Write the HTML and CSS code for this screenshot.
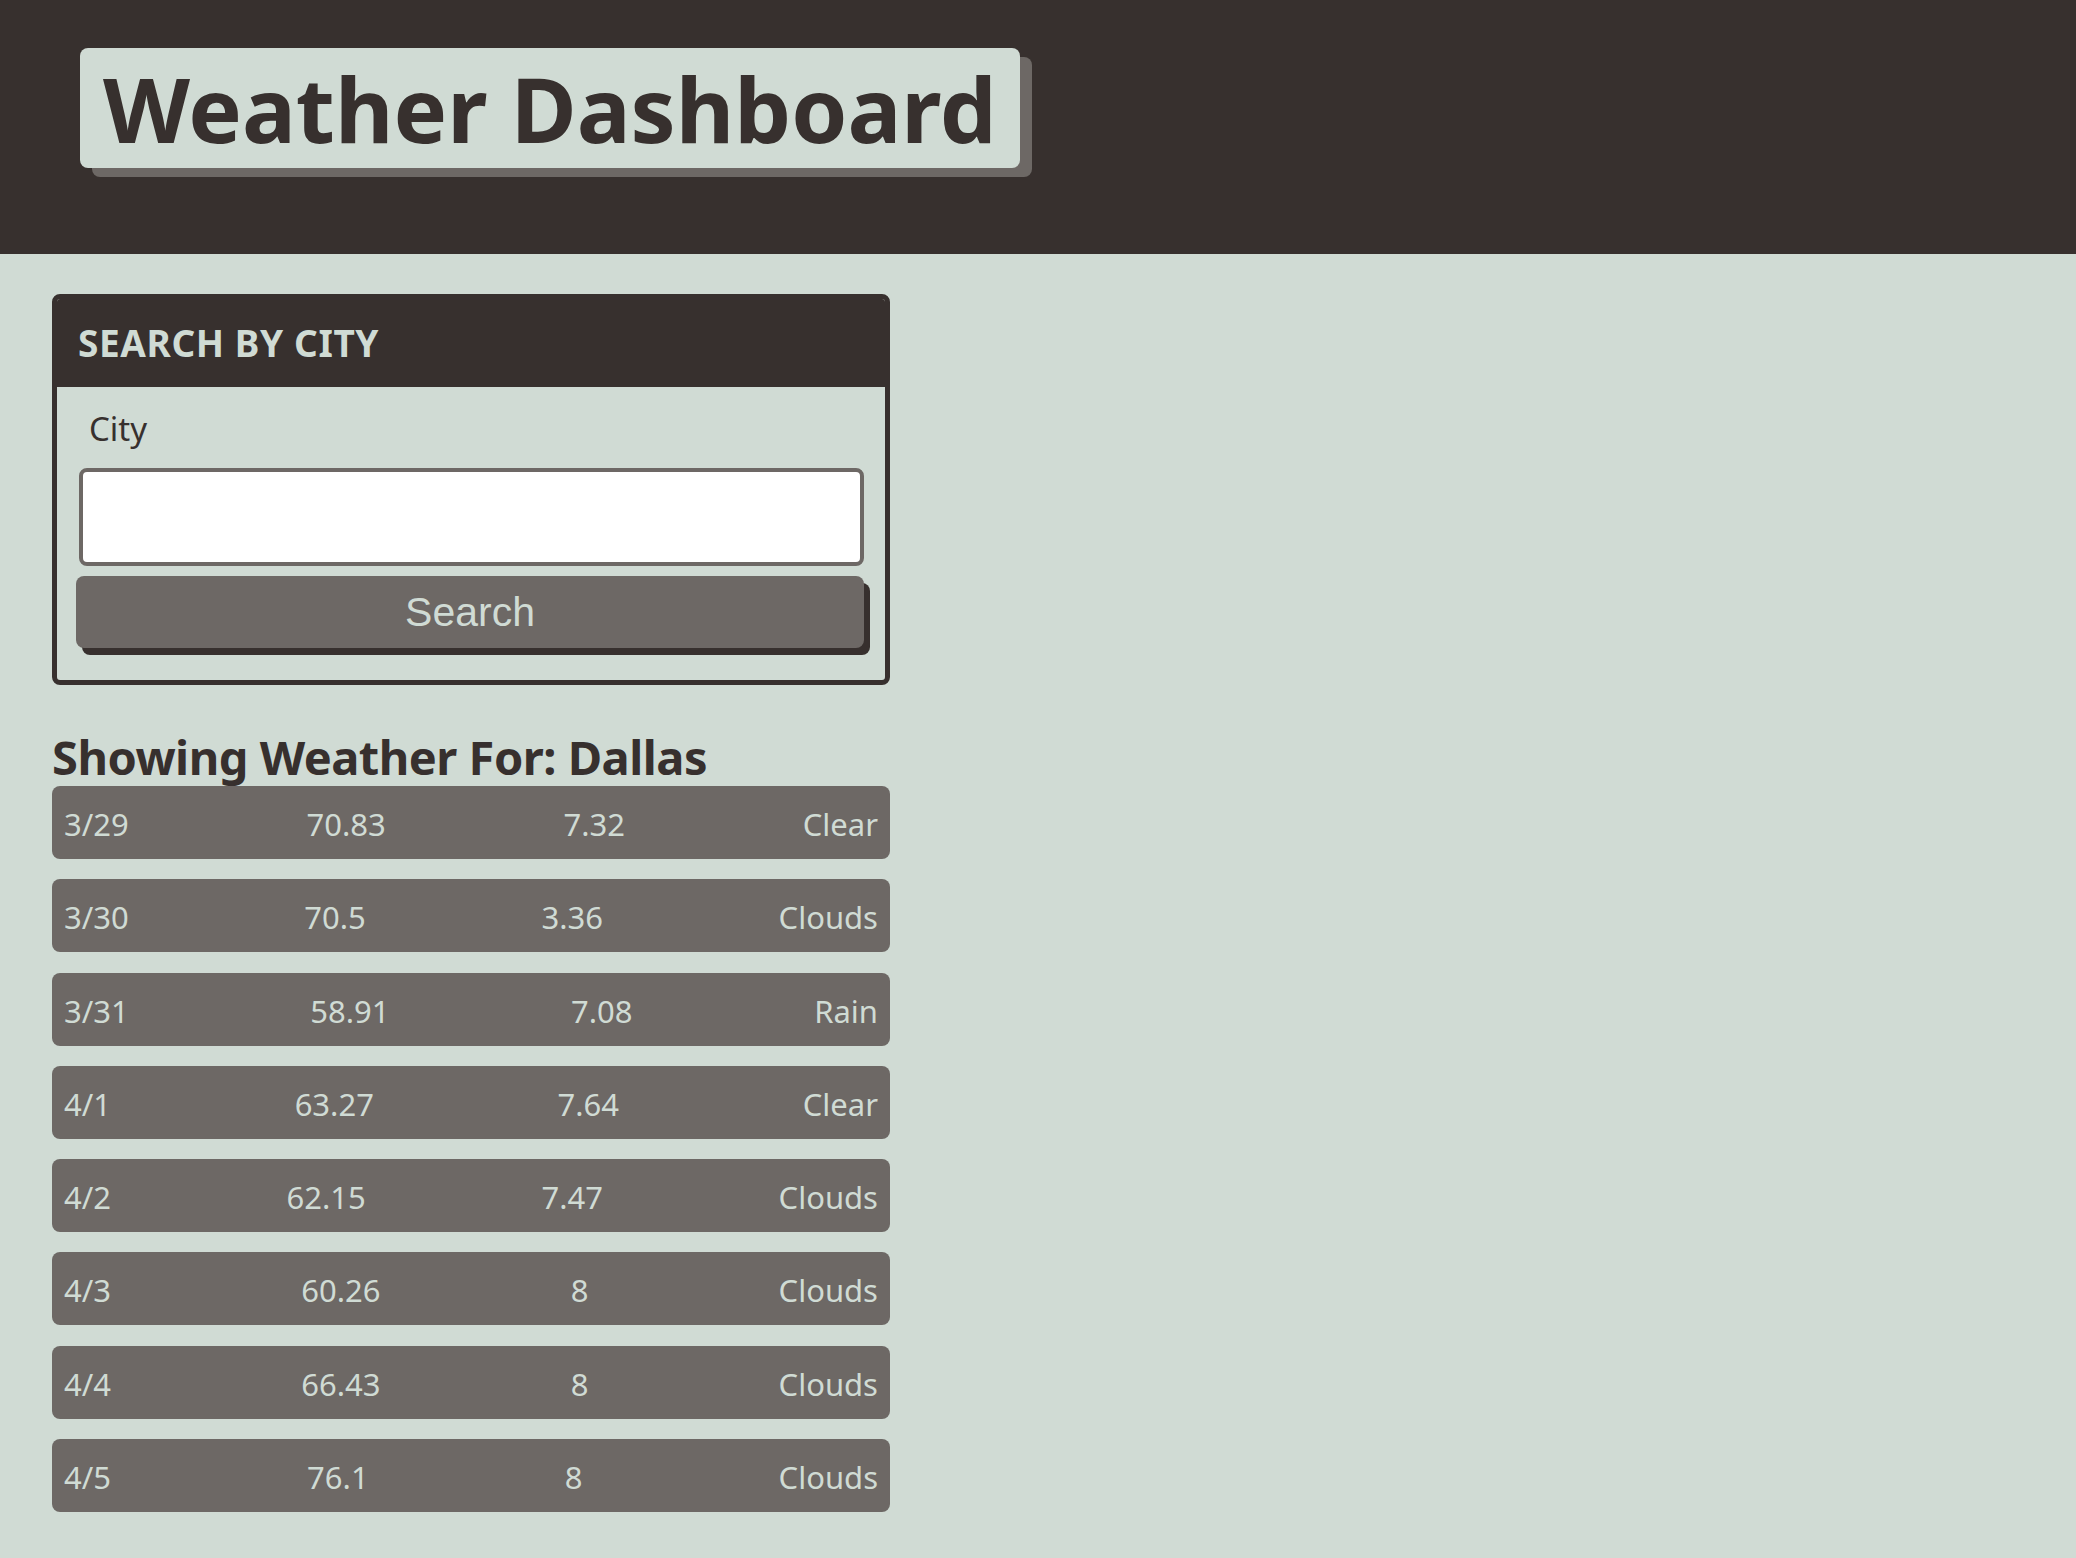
FILE: index.html
```html
<!DOCTYPE html>
<html lang="en">
<head>
<meta charset="utf-8">
<title>Weather Dashboard</title>
<link rel="stylesheet" href="styles.css">
</head>
<body>
<header class="site-header">
  <h1 class="site-title">Weather Dashboard</h1>
</header>
<main class="content">
  <section class="search-card">
    <h2 class="card-header">Search by City</h2>
    <div class="card-body">
      <label class="city-label" for="city">City</label>
      <input class="city-input" id="city" type="text">
      <button class="search-btn" type="button">Search</button>
    </div>
  </section>
  <h2 class="results-title">Showing Weather For: Dallas</h2>
  <ul class="forecast">
    <li class="day"><span>3/29</span><span>70.83</span><span>7.32</span><span>Clear</span></li>
    <li class="day"><span>3/30</span><span>70.5</span><span>3.36</span><span>Clouds</span></li>
    <li class="day"><span>3/31</span><span>58.91</span><span>7.08</span><span>Rain</span></li>
    <li class="day"><span>4/1</span><span>63.27</span><span>7.64</span><span>Clear</span></li>
    <li class="day"><span>4/2</span><span>62.15</span><span>7.47</span><span>Clouds</span></li>
    <li class="day"><span>4/3</span><span>60.26</span><span>8</span><span>Clouds</span></li>
    <li class="day"><span>4/4</span><span>66.43</span><span>8</span><span>Clouds</span></li>
    <li class="day"><span>4/5</span><span>76.1</span><span>8</span><span>Clouds</span></li>
  </ul>
</main>
</body>
</html>
```

FILE: styles.css
```css
* { box-sizing: border-box; }
html, body { margin: 0; padding: 0; }
body {
  background: #d0dbd4;
  color: #37302e;
  font-family: "Noto Sans", "Open Sans", sans-serif;
  min-height: 1558px;
}
.site-header {
  background: #37302e;
  height: 254px;
  padding: 48px 0 0 80px;
}
.site-title {
  display: inline-block;
  margin: 0;
  background: #d0dbd4;
  color: #37302e;
  border-radius: 8px;
  box-shadow: 12px 9px 0 #6d6865;
  font-size: 90px;
  font-weight: 700;
  line-height: 120px;
  height: 120px;
  padding: 0 23px;
  letter-spacing: 0;
}
.content {
  width: 890px;
  padding: 40px 0 0 52px;
}
.search-card {
  border: 5px solid #37302e;
  border-radius: 8px;
  overflow: hidden;
}
.card-header {
  margin: 0;
  background: #37302e;
  color: #d0dbd4;
  text-transform: uppercase;
  font-size: 37px;
  font-weight: 700;
  height: 88px;
  line-height: 88px;
  padding: 0 0 0 21px;
  letter-spacing: 0.6px;
}
.card-body {
  padding: 20px 21px 32px 19px;
  display: flex;
  flex-direction: column;
}
.city-label {
  font-size: 33px;
  color: #37302e;
  padding-left: 13px;
  line-height: 44px;
  margin-bottom: 17px;
}
.city-input {
  height: 98px;
  margin: 0 0 10px 3px;
  border: 4px solid #6d6865;
  border-radius: 8px;
  background: #fff;
  font-size: 30px;
}
.search-btn {
  height: 72px;
  border: none;
  border-radius: 8px;
  background: #6d6865;
  color: #d0dbd4;
  font-family: "Liberation Sans", Arial, sans-serif;
  font-size: 41px;
  box-shadow: 6px 7px 0 #37302e;
  padding: 0;
}
.results-title {
  margin: 44px 0 1px;
  font-size: 47px;
  font-weight: 700;
  line-height: 56px;
  color: #37302e;
  letter-spacing: -0.5px;
}
.forecast {
  list-style: none;
  margin: 0;
  padding: 0;
  display: flex;
  flex-direction: column;
  gap: 20.25px;
}
.day {
  display: flex;
  justify-content: space-between;
  align-items: center;
  background: #6d6865;
  color: #d0dbd4;
  border-radius: 8px;
  height: 73px;
  padding: 3px 12px 0;
  font-size: 31px;
}
```
